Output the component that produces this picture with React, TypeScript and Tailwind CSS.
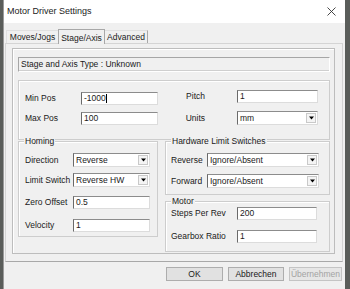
import React from "react";

const font = "font-['Liberation_Sans',Arial,sans-serif] text-[8.5px] text-[#1a1a1a]";

function Field({ cls, value, caret }: { cls: string; value: string; caret?: boolean }) {
  return (
    <div
      className={`${cls} flex items-center bg-white border border-t-[#8c8c8c] border-l-[#6a6a6a] border-r-[#dcdcdc] border-b-[#dcdcdc] pl-[2px] leading-none`}
    >
      <span>{value}</span>
      {caret && <span className="w-px h-[9px] bg-black" />}
    </div>
  );
}

function Combo({ cls, value }: { cls: string; value: string }) {
  return (
    <div
      className={`${cls} flex items-stretch bg-white border border-t-[#8c8c8c] border-l-[#6a6a6a] border-r-[#dcdcdc] border-b-[#dcdcdc] leading-none`}
    >
      <span className="flex-1 flex items-center pl-[2px]">{value}</span>
      <span className="w-[10px] my-[1px] mr-[1px] flex items-center justify-center border border-[#c9c9c9] bg-[#f4f4f4]">
        <svg width="5" height="4" viewBox="0 0 5 4">
          <path d="M0 0.5 H5 L2.5 3.5 Z" fill="#000" />
        </svg>
      </span>
    </div>
  );
}

function Group({ cls, title, children }: { cls: string; title: string; children: React.ReactNode }) {
  return (
    <div className={`${cls} relative border border-[#cdcdcd] shadow-[inset_1px_1px_0_#ffffff]`}>
      <span className="absolute -top-[6px] left-[5px] bg-[#f0f0f0] px-[1px] leading-[10px]">{title}</span>
      {children}
    </div>
  );
}

export default function App() {
  return (
    <div className={`${font} w-[350px] h-[289px] flex overflow-hidden bg-[#5a5d5a]`}>
      <div className="ml-[3px] w-[342px] h-full flex flex-col bg-[#f0f0f0] border-l border-[#9a9a9a]">
        {/* title bar */}
        <div className="h-[23px] bg-white flex items-center pl-[3px] pr-[9px] text-[9px] text-[#222]">
          <span>Motor Driver Settings</span>
          <svg className="ml-auto" width="9" height="9" viewBox="0 0 9 9">
            <path d="M0.5 0.5 L8.5 8.5 M8.5 0.5 L0.5 8.5" stroke="#333" strokeWidth="0.9" />
          </svg>
        </div>

        {/* tabs */}
        <div className="mt-[5px] h-[15px] flex items-end pl-[2px]">
          <div className="h-[13px] w-[52px] flex items-center justify-center border-t border-l border-[#e0e0e0]">
            Moves/Jogs
          </div>
          <div className="h-[15px] w-[47px] flex items-start pt-[2px] justify-center bg-[#f0f0f0] border-t border-l border-r border-[#a8a8a8] -mb-px relative z-10">
            Stage/Axis
          </div>
          <div className="h-[13px] w-[43px] flex items-center justify-center border-t border-r border-[#a8a8a8] border-t-[#e0e0e0]">
            Advanced
          </div>
        </div>

        {/* tab pane */}
        <div className="ml-[1px] w-[338px] h-[219px] border border-[#d4d4d4] border-b-[#a8a8a8] pt-[4px] pl-[6px]">
          <div className="w-[323px] h-[206px] border border-[#bdbdbd] shadow-[inset_1px_1px_0_#ffffff] flex flex-col pl-[5px]">
            {/* info box */}
            <div className="mt-[8px] w-[312px] h-[15px] flex items-center pl-[2px] border border-t-[#a6a6a6] border-l-[#a6a6a6] border-r-[#ffffff] border-b-[#ffffff] shadow-[inset_0_-1px_0_#cfcfcf]">
              Stage and Axis Type : Unknown
            </div>

            {/* position group */}
            <div className="mt-[8px] w-[312px] h-[60px] border border-[#cdcdcd] shadow-[inset_1px_1px_0_#ffffff] flex">
              <div className="pl-[6px] pt-[11px] flex flex-col gap-[7px]">
                <div className="flex items-center">
                  <span className="w-[56px]">Min Pos</span>
                  <Field cls="w-[77px] h-[13px]" value="-1000" caret />
                </div>
                <div className="flex items-center">
                  <span className="w-[56px]">Max Pos</span>
                  <Field cls="w-[77px] h-[13px]" value="100" />
                </div>
              </div>
              <div className="pt-[9px] flex flex-col gap-[8px]">
                <div className="flex items-center">
                  <span className="w-[47px] text-right">Pitch</span>
                  <Field cls="ml-[32px] w-[81px] h-[13px]" value="1" />
                </div>
                <div className="flex items-center">
                  <span className="w-[47px] text-right">Units</span>
                  <Combo cls="ml-[32px] w-[81px] h-[14px]" value="mm" />
                </div>
              </div>
            </div>

            {/* lower groups */}
            <div className="mt-[1px] flex gap-[7px]">
              <Group cls="w-[140px] h-[96px] pl-[6px] pt-[11px] flex flex-col" title="Homing">
                <div className="flex items-center">
                  <span className="w-[48px]">Direction</span>
                  <Combo cls="w-[77px] h-[14px]" value="Reverse" />
                </div>
                <div className="mt-[6px] flex items-center">
                  <span className="w-[48px]">Limit Switch</span>
                  <Combo cls="w-[77px] h-[14px]" value="Reverse HW" />
                </div>
                <div className="mt-[9px] flex items-center">
                  <span className="w-[48px]">Zero Offset</span>
                  <Field cls="w-[77px] h-[13px]" value="0.5" />
                </div>
                <div className="mt-[10px] flex items-center">
                  <span className="w-[48px]">Velocity</span>
                  <Field cls="w-[77px] h-[13px]" value="1" />
                </div>
              </Group>

              <div className="flex flex-col">
                <Group cls="w-[165px] h-[54px] pl-[5px] pt-[11px] flex flex-col" title="Hardware Limit Switches">
                  <div className="flex items-center">
                    <span className="w-[36px]">Reverse</span>
                    <Combo cls="w-[112px] h-[14px]" value="Ignore/Absent" />
                  </div>
                  <div className="mt-[7px] flex items-center">
                    <span className="w-[36px]">Forward</span>
                    <Combo cls="w-[112px] h-[14px]" value="Ignore/Absent" />
                  </div>
                </Group>
                <Group cls="mt-[6px] w-[165px] h-[51px] pl-[5px] pt-[5px] flex flex-col" title="Motor">
                  <div className="flex items-center">
                    <span className="w-[66px]">Steps Per Rev</span>
                    <Field cls="w-[80px] h-[13px]" value="200" />
                  </div>
                  <div className="mt-[10px] flex items-center">
                    <span className="w-[66px]">Gearbox Ratio</span>
                    <Field cls="w-[80px] h-[13px]" value="1" />
                  </div>
                </Group>
              </div>
            </div>
          </div>
        </div>

        {/* buttons */}
        <div className="mt-[5px] flex justify-end pr-[3px] gap-[5px]">
          <div className="w-[57px] h-[14px] flex items-center justify-center bg-[#e1e1e1] border border-[#adadad]">OK</div>
          <div className="w-[56px] h-[14px] flex items-center justify-center bg-[#e1e1e1] border border-[#adadad]">Abbrechen</div>
          <div className="w-[53px] h-[14px] flex items-center justify-center bg-[#e6e6e6] border border-[#c4c4c4] text-[#a3a3a3]">Übernehmen</div>
        </div>
      </div>
    </div>
  );
}
